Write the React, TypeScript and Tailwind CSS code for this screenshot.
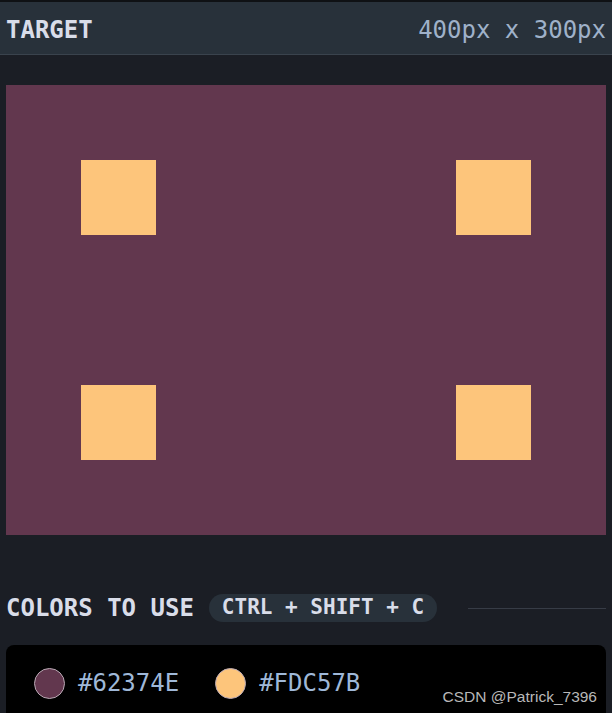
const SQUARES = [
  { x: 75, y: 75 },
  { x: 450, y: 75 },
  { x: 75, y: 300 },
  { x: 450, y: 300 },
];

const COLORS = ["#62374E", "#FDC57B"];

export default function App() {
  return (
    <div className="min-h-[713px] w-[612px] overflow-hidden bg-[#1b1e25] font-['DejaVu_Sans_Mono',monospace]">
      <div className="h-[2px] bg-[#0f1114]" />
      <div className="flex h-[53px] items-center justify-between border-b border-[#3a434d] bg-[#28313a] px-[6px] pt-[3px]">
        <span className="text-[24px] font-bold text-[#d9dde9]">TARGET</span>
        <span className="text-[24px] text-[#9fb1c9]">400px x 300px</span>
      </div>

      <div className="px-[6px] pt-[30px]">
        <div className="relative h-[450px] w-[600px] bg-[#62374E]">
          {SQUARES.map((s, i) => (
            <div
              key={i}
              className="absolute h-[75px] w-[75px] bg-[#FDC57B]"
              style={{ left: s.x, top: s.y }}
            />
          ))}
        </div>
      </div>

      <div className="mt-[57px] flex h-[32px] items-center px-[6px]">
        <span className="text-[24px] font-bold text-[#d9dde9]">COLORS TO USE</span>
        <span className="ml-[15px] flex h-[28px] items-center rounded-full bg-[#28313a] px-[13px] text-[21px] font-bold text-[#d9dde9]">
          CTRL + SHIFT + C
        </span>
        <div className="ml-[31px] h-px flex-1 bg-[#373c46]" />
      </div>

      <div className="relative mx-[6px] mt-[21px] flex h-[80px] items-center gap-[36px] rounded-t-[8px] bg-black px-[28px] pb-[4px]">
        {COLORS.map((c) => (
          <div key={c} className="flex items-center gap-[13px]">
            <div
              className="h-[31px] w-[31px] rounded-full border border-[#b9a9b4]"
              style={{ backgroundColor: c }}
            />
            <span className="text-[24px] text-[#9fb8d8]">{c}</span>
          </div>
        ))}
        <span className="absolute right-[9px] top-[40px] font-['Liberation_Sans',sans-serif] text-[15.5px] text-[#b8b8b8]">
          CSDN @Patrick_7396
        </span>
      </div>
    </div>
  );
}
